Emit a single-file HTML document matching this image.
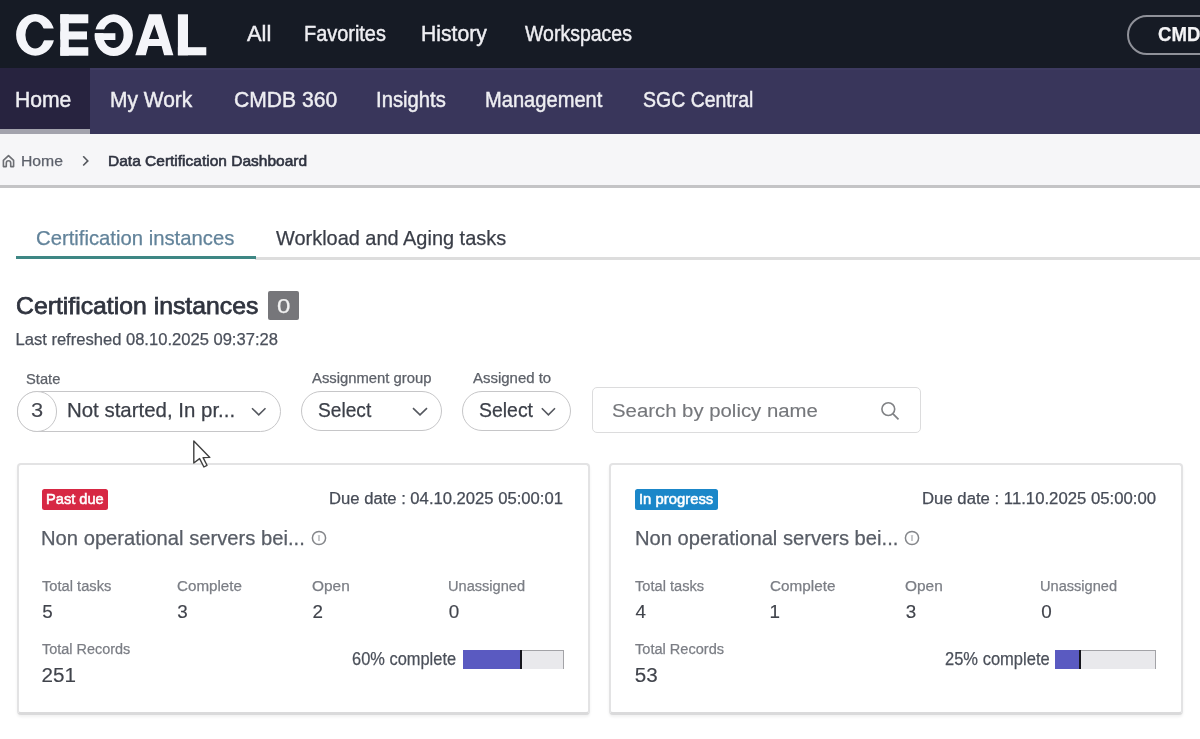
<!DOCTYPE html>
<html><head><meta charset="utf-8"><title>Data Certification Dashboard</title>
<style>
html,body{margin:0;padding:0;width:1200px;height:739px;overflow:hidden;background:#fff;}
body{position:relative;font-family:"Liberation Sans", sans-serif;}
#wrap{position:absolute;left:0;top:0;width:1200px;height:739px;background:#fff;overflow:hidden;filter:blur(0.3px);}
.t{position:absolute;white-space:nowrap;line-height:1;transform-origin:0 0;-webkit-text-stroke:0.25px currentColor;}
</style></head><body>
<div id="wrap">
<div style="position:absolute;left:0px;top:0px;width:1200px;height:68px;background:#161b25;"></div>
<div style="position:absolute;left:0px;top:68px;width:1200px;height:66px;background:#39365b;"></div>
<div style="position:absolute;left:0px;top:68px;width:1200px;height:1.5px;background:#3d3a60;"></div>
<div style="position:absolute;left:0px;top:68px;width:90.3px;height:61px;background:#27233f;"></div>
<div style="position:absolute;left:0px;top:129px;width:90.3px;height:5.5px;background:#a3a3ad;"></div>
<div style="position:absolute;left:0px;top:134px;width:1200px;height:51px;background:#f6f6f8;"></div>
<div style="position:absolute;left:0px;top:185px;width:1200px;height:2.8px;background:#c4c4c6;"></div>
<svg style="position:absolute;left:0;top:0" width="220" height="67" viewBox="0 0 220 67">
<g fill="#f4f5f9">
<path fill-rule="evenodd" d="M35.35 13.9 A19.25 20.9 0 1 0 35.35 55.7 A19.25 20.9 0 1 0 35.35 13.9 Z M35.15 21.6 A9.75 13.4 0 1 1 35.15 48.4 A9.75 13.4 0 1 1 35.15 21.6 Z"/>
<rect x="60.3" y="14.3" width="8.5" height="41.4"/>
<rect x="60.3" y="14.3" width="28" height="9"/>
<rect x="60.3" y="31.4" width="26.7" height="8.1"/>
<rect x="60.3" y="47.2" width="28" height="8.5"/>
<path fill-rule="evenodd" d="M113.8 14.3 A19.1 20.9 0 1 0 113.8 56.1 A19.1 20.9 0 1 0 113.8 14.3 Z M113.45 22 A10.15 13 0 1 1 113.45 48 A10.15 13 0 1 1 113.45 22 Z"/>
<path d="M149 14.3 H161.2 L173.4 55.3 H164.1 L161.6 46 H148.3 L145.8 55.3 H135.3 Z M154.4 24.5 L149 39.1 H159.2 Z" fill-rule="evenodd"/>
<rect x="177.9" y="14.3" width="10.1" height="41"/>
<rect x="177.9" y="47.2" width="28.4" height="8.1"/>
</g>
<rect x="40" y="28.5" width="17" height="11.8" fill="#161b25"/>
<rect x="92" y="29.4" width="13" height="3.8" fill="#161b25"/>
<rect x="94.8" y="33.2" width="20.6" height="6.8" fill="#f4f5f9"/>
</svg>
<div class="t" id="h_All" style="left:246.70px;top:22.63px;font-size:22.53px;color:#eeeef2;transform:scaleX(0.9727);-webkit-text-stroke:0.45px currentColor;">All</div>
<div class="t" id="h_Favorites" style="left:304.41px;top:22.63px;font-size:22.53px;color:#eeeef2;transform:scaleX(0.8844);-webkit-text-stroke:0.45px currentColor;">Favorites</div>
<div class="t" id="h_History" style="left:421.01px;top:22.63px;font-size:22.53px;color:#eeeef2;transform:scaleX(0.9390);-webkit-text-stroke:0.45px currentColor;">History</div>
<div class="t" id="h_Workspaces" style="left:524.60px;top:22.63px;font-size:22.53px;color:#eeeef2;transform:scaleX(0.8665);-webkit-text-stroke:0.45px currentColor;">Workspaces</div>
<div style="position:absolute;left:1126.5px;top:15px;width:200px;height:40.4px;box-sizing:border-box;border:2px solid #8f9199;border-radius:21px;"></div>
<div class="t" id="cmd" style="left:1158.26px;top:24.10px;font-size:20.20px;color:#f4f4f6;font-weight:700;transform:scaleX(0.9200);">CMDB</div>
<div class="t" id="n_Home" style="left:15.01px;top:89.30px;font-size:22.09px;color:#eeeef2;transform:scaleX(0.9569);-webkit-text-stroke:0.45px currentColor;">Home</div>
<div class="t" id="n_MyWork" style="left:110.32px;top:89.30px;font-size:22.09px;color:#eeeef2;transform:scaleX(0.9500);-webkit-text-stroke:0.45px currentColor;">My Work</div>
<div class="t" id="n_CMDB360" style="left:233.94px;top:89.30px;font-size:22.09px;color:#eeeef2;transform:scaleX(0.9561);-webkit-text-stroke:0.45px currentColor;">CMDB 360</div>
<div class="t" id="n_Insights" style="left:375.88px;top:89.30px;font-size:22.09px;color:#eeeef2;transform:scaleX(0.9175);-webkit-text-stroke:0.45px currentColor;">Insights</div>
<div class="t" id="n_Management" style="left:485.39px;top:89.30px;font-size:22.09px;color:#eeeef2;transform:scaleX(0.9108);-webkit-text-stroke:0.45px currentColor;">Management</div>
<div class="t" id="n_SGCCentral" style="left:643.12px;top:89.30px;font-size:22.09px;color:#eeeef2;transform:scaleX(0.8824);-webkit-text-stroke:0.45px currentColor;">SGC Central</div>
<svg style="position:absolute;left:0;top:148px" width="20" height="24" viewBox="0 0 20 24"><path d="M6.3 18.6 V15 A2.2 2.2 0 0 1 10.7 15 V18.6 H13.6 V12.4 L8.5 7.6 L3.4 12.4 V18.6 Z" fill="none" stroke="#6d6f74" stroke-width="1.6" stroke-linejoin="round"/></svg>
<div class="t" id="bc_home" style="left:20.74px;top:153.08px;font-size:15.26px;color:#5d616b;transform:scaleX(1.0319);">Home</div>
<svg style="position:absolute;left:80px;top:156px" width="12" height="12" viewBox="0 0 12 12"><path d="M3.2 0.3 L7.8 4.9 L3.2 9.5" fill="none" stroke="#55585e" stroke-width="1.6"/></svg>
<div class="t" id="bc_dash" style="left:107.76px;top:153.08px;font-size:15.26px;color:#2f3340;transform:scaleX(1.0168);-webkit-text-stroke:0.6px currentColor;">Data Certification Dashboard</div>
<div class="t" id="tab1" style="left:36.29px;top:227.53px;font-size:20.64px;color:#62839a;transform:scaleX(0.9830);">Certification instances</div>
<div class="t" id="tab2" style="left:275.90px;top:227.53px;font-size:20.64px;color:#3a3e48;transform:scaleX(0.9665);">Workload and Aging tasks</div>
<div style="position:absolute;left:255px;top:257px;width:945px;height:2.5px;background:#dddddd;"></div>
<div style="position:absolute;left:16px;top:256px;width:239.5px;height:3px;background:#3e8784;"></div>
<div class="t" id="title" style="left:15.56px;top:293.58px;font-size:24.13px;color:#30343f;transform:scaleX(1.0268);-webkit-text-stroke:0.75px currentColor;">Certification instances</div>
<div style="position:absolute;left:268.3px;top:290.5px;width:30.9px;height:29px;background:#76767a;border-radius:2px;"></div>
<div class="t" id="badge0" style="left:277.04px;top:295.53px;font-size:20.64px;color:#f2f2f2;transform:scaleX(1.1608);">0</div>
<div class="t" id="lastref" style="left:15.47px;top:332.17px;font-size:16.57px;color:#4b505b;">Last refreshed 08.10.2025 09:37:28</div>
<div class="t" id="lbl_state" style="left:26.34px;top:371.77px;font-size:14.10px;color:#5d6169;transform:scaleX(1.0426);">State</div>
<div class="t" id="lbl_ag" style="left:312.00px;top:372.06px;font-size:13.81px;color:#5d6169;transform:scaleX(1.0746);">Assignment group</div>
<div class="t" id="lbl_at" style="left:473.00px;top:372.06px;font-size:13.81px;color:#5d6169;transform:scaleX(1.0839);">Assigned to</div>
<div style="position:absolute;left:16.5px;top:391px;width:264px;height:40.5px;box-sizing:border-box;border:1.5px solid #c6c6c8;border-radius:21px;background:#fff;"></div>
<div style="position:absolute;left:16.5px;top:391px;width:40.5px;height:40.5px;box-sizing:border-box;border:1.5px solid #c6c6c8;border-radius:50%;background:#fff;"></div>
<div class="t" id="st3" style="left:30.72px;top:399.78px;font-size:20.93px;color:#44474f;transform:scaleX(1.0461);-webkit-text-stroke:0.1px currentColor;">3</div>
<div class="t" id="stxt" style="left:66.66px;top:400.03px;font-size:20.64px;color:#3b3f48;transform:scaleX(0.9907);">Not started, In pr...</div>
<svg style="position:absolute;left:0;top:0;overflow:visible" width="1" height="1"><path d="M252 408.2 L258.75 414.8 L265.5 408.2" fill="none" stroke="#55585f" stroke-width="1.6"/></svg>
<div style="position:absolute;left:301px;top:391px;width:140.5px;height:40px;box-sizing:border-box;border:1.5px solid #c6c6c8;border-radius:21px;background:#fff;"></div>
<div class="t" id="sel1" style="left:317.89px;top:400.03px;font-size:20.64px;color:#3b3f48;transform:scaleX(0.9290);">Select</div>
<svg style="position:absolute;left:0;top:0;overflow:visible" width="1" height="1"><path d="M413 408.2 L420.0 414.8 L427 408.2" fill="none" stroke="#55585f" stroke-width="1.6"/></svg>
<div style="position:absolute;left:462px;top:391px;width:109px;height:40px;box-sizing:border-box;border:1.5px solid #c6c6c8;border-radius:21px;background:#fff;"></div>
<div class="t" id="sel2" style="left:479.12px;top:400.03px;font-size:20.64px;color:#3b3f48;transform:scaleX(0.9423);">Select</div>
<svg style="position:absolute;left:0;top:0;overflow:visible" width="1" height="1"><path d="M541.8 408.2 L548.4 414.8 L555 408.2" fill="none" stroke="#55585f" stroke-width="1.6"/></svg>
<div style="position:absolute;left:591.5px;top:387px;width:329.5px;height:46px;box-sizing:border-box;border:1.3px solid #dcdcdd;border-radius:5px;background:#fff;"></div>
<div class="t" id="search" style="left:612.38px;top:401.51px;font-size:18.90px;color:#75777b;transform:scaleX(1.0769);-webkit-text-stroke:0.12px currentColor;">Search by policy name</div>
<svg style="position:absolute;left:878px;top:399px" width="24" height="24" viewBox="0 0 24 24"><circle cx="10.3" cy="10.1" r="6.4" fill="none" stroke="#808285" stroke-width="1.6"/><path d="M15 14.8 L20.5 20.3" stroke="#808285" stroke-width="1.7"/></svg>
<div style="position:absolute;left:16.5px;top:462.5px;width:573.5px;height:252px;border:2px solid #e3e3e4;border-bottom:3px solid #dadadb;border-radius:4px;background:#fff;box-shadow:0 2px 3px rgba(0,0,0,0.06);box-sizing:border-box;"></div>
<div style="position:absolute;left:41.8px;top:488.7px;width:66.7px;height:20.9px;background:#d72844;border-radius:2.5px;"></div>
<div class="t" id="badge_Pastdue" style="left:46.43px;top:490.78px;font-size:15.26px;color:#ffffff;transform:scaleX(0.9588);-webkit-text-stroke:0.55px currentColor;">Past due</div>
<div class="t" id="due16.5" style="left:329.17px;top:491.09px;font-size:15.84px;color:#474c57;transform:scaleX(1.0509);">Due date : 04.10.2025 05:00:01</div>
<div class="t" id="non16.5" style="left:41.28px;top:527.62px;font-size:20.06px;color:#585d66;transform:scaleX(1.0072);">Non operational servers bei...</div>
<svg style="position:absolute;left:311.40000000000003px;top:529.7px" width="16" height="16" viewBox="0 0 16 16"><circle cx="8" cy="8" r="6.6" fill="none" stroke="#84868a" stroke-width="1.5"/><path d="M8 5.6 V11" stroke="#9a9ca0" stroke-width="1.1"/><path d="M6.8 5.6 H9.2" stroke="#c0c2c5" stroke-width="0.8"/></svg>
<div class="t" id="lab16.5_0" style="left:42.21px;top:579.45px;font-size:14.83px;color:#7b7e85;transform:scaleX(0.9894);">Total tasks</div>
<div class="t" id="val16.5_0" style="left:42.25px;top:602.82px;font-size:18.82px;color:#41444c;-webkit-text-stroke:0.15px currentColor;">5</div>
<div class="t" id="lab16.5_1" style="left:176.74px;top:579.45px;font-size:14.83px;color:#7b7e85;transform:scaleX(1.0234);">Complete</div>
<div class="t" id="val16.5_1" style="left:177.25px;top:602.82px;font-size:18.82px;color:#41444c;-webkit-text-stroke:0.15px currentColor;">3</div>
<div class="t" id="lab16.5_2" style="left:312.31px;top:579.45px;font-size:14.83px;color:#7b7e85;transform:scaleX(1.0399);">Open</div>
<div class="t" id="val16.5_2" style="left:312.56px;top:602.82px;font-size:18.82px;color:#41444c;-webkit-text-stroke:0.15px currentColor;">2</div>
<div class="t" id="lab16.5_3" style="left:447.91px;top:579.45px;font-size:14.83px;color:#7b7e85;transform:scaleX(0.9842);">Unassigned</div>
<div class="t" id="val16.5_3" style="left:448.75px;top:602.82px;font-size:18.82px;color:#41444c;-webkit-text-stroke:0.15px currentColor;">0</div>
<div class="t" id="tr16.5" style="left:42.21px;top:642.45px;font-size:14.83px;color:#7b7e85;transform:scaleX(0.9739);">Total Records</div>
<div class="t" id="trv16.5" style="left:41.47px;top:665.03px;font-size:20.64px;color:#41444c;-webkit-text-stroke:0.15px currentColor;">251</div>
<div class="t" id="pct16.5" style="left:352.18px;top:650.43px;font-size:18.10px;color:#4b505a;transform:scaleX(0.9077);">60% complete</div>
<div style="position:absolute;left:462.5px;top:650px;width:101px;height:19.3px;background:#e9e9ec;border-top:1.5px solid #a3a3a7;border-right:1.5px solid #a3a3a7;box-sizing:border-box;"></div>
<div style="position:absolute;left:462.5px;top:650px;width:57.4px;height:19.3px;background:#5a5ac1;"></div>
<div style="position:absolute;left:519.9px;top:650px;width:2.3px;height:19.3px;background:#16161c;"></div>
<div style="position:absolute;left:608.5px;top:462.5px;width:574px;height:252px;border:2px solid #e3e3e4;border-bottom:3px solid #dadadb;border-radius:4px;background:#fff;box-shadow:0 2px 3px rgba(0,0,0,0.06);box-sizing:border-box;"></div>
<div style="position:absolute;left:634.5px;top:488.7px;width:83.0px;height:20.9px;background:#1b87c9;border-radius:2.5px;"></div>
<div class="t" id="badge_Inprogress" style="left:638.66px;top:490.78px;font-size:15.26px;color:#ffffff;transform:scaleX(0.9735);-webkit-text-stroke:0.55px currentColor;">In progress</div>
<div class="t" id="due608.5" style="left:922.36px;top:491.09px;font-size:15.84px;color:#474c57;transform:scaleX(1.0568);">Due date : 11.10.2025 05:00:00</div>
<div class="t" id="non608.5" style="left:634.64px;top:527.62px;font-size:20.06px;color:#585d66;transform:scaleX(1.0056);">Non operational servers bei...</div>
<svg style="position:absolute;left:904.35px;top:529.7px" width="16" height="16" viewBox="0 0 16 16"><circle cx="8" cy="8" r="6.6" fill="none" stroke="#84868a" stroke-width="1.5"/><path d="M8 5.6 V11" stroke="#9a9ca0" stroke-width="1.1"/><path d="M6.8 5.6 H9.2" stroke="#c0c2c5" stroke-width="0.8"/></svg>
<div class="t" id="lab608.5_0" style="left:635.21px;top:579.45px;font-size:14.83px;color:#7b7e85;transform:scaleX(0.9858);">Total tasks</div>
<div class="t" id="val608.5_0" style="left:635.62px;top:602.82px;font-size:18.82px;color:#41444c;-webkit-text-stroke:0.15px currentColor;">4</div>
<div class="t" id="lab608.5_1" style="left:769.74px;top:579.45px;font-size:14.83px;color:#7b7e85;transform:scaleX(1.0315);">Complete</div>
<div class="t" id="val608.5_1" style="left:769.59px;top:602.82px;font-size:18.82px;color:#41444c;-webkit-text-stroke:0.15px currentColor;">1</div>
<div class="t" id="lab608.5_2" style="left:905.31px;top:579.45px;font-size:14.83px;color:#7b7e85;transform:scaleX(1.0399);">Open</div>
<div class="t" id="val608.5_2" style="left:905.75px;top:602.82px;font-size:18.82px;color:#41444c;-webkit-text-stroke:0.15px currentColor;">3</div>
<div class="t" id="lab608.5_3" style="left:1040.31px;top:579.45px;font-size:14.83px;color:#7b7e85;transform:scaleX(0.9842);">Unassigned</div>
<div class="t" id="val608.5_3" style="left:1041.15px;top:602.82px;font-size:18.82px;color:#41444c;-webkit-text-stroke:0.15px currentColor;">0</div>
<div class="t" id="tr608.5" style="left:635.21px;top:642.45px;font-size:14.83px;color:#7b7e85;transform:scaleX(0.9823);">Total Records</div>
<div class="t" id="trv608.5" style="left:634.67px;top:665.03px;font-size:20.64px;color:#41444c;-webkit-text-stroke:0.15px currentColor;">53</div>
<div class="t" id="pct608.5" style="left:944.87px;top:650.43px;font-size:18.10px;color:#4b505a;transform:scaleX(0.9130);">25% complete</div>
<div style="position:absolute;left:1055.2px;top:650px;width:101px;height:19.3px;background:#e9e9ec;border-top:1.5px solid #a3a3a7;border-right:1.5px solid #a3a3a7;box-sizing:border-box;"></div>
<div style="position:absolute;left:1055.2px;top:650px;width:23.8px;height:19.3px;background:#5a5ac1;"></div>
<div style="position:absolute;left:1079.0px;top:650px;width:1.6px;height:19.3px;background:#16161c;"></div>
<svg style="position:absolute;left:0;top:0" width="1200" height="739"><path d="M193.8,441 L193.8,463 L199.6,458.6 L203.9,467 L207,465.3 L203.1,457.6 L209.8,457.4 Z" fill="#ffffff" stroke="#404040" stroke-width="1.4" stroke-linejoin="round"/></svg>
</div></body></html>
